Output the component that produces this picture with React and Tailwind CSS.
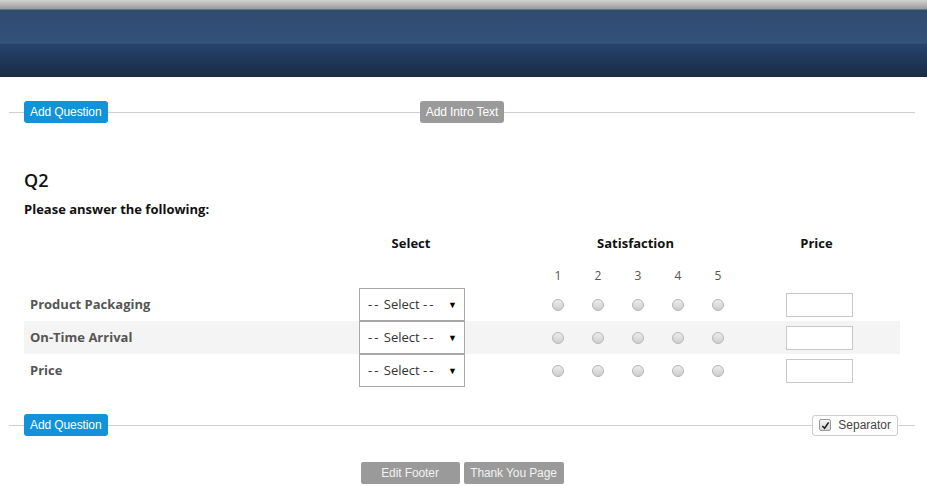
const rows = ['Product Packaging', 'On-Time Arrival', 'Price'];
const scale = [1, 2, 3, 4, 5];

function Btn({ children, gray }) {
  return (
    <button
      type="button"
      className={`h-[22px] shrink-0 rounded-[3px] px-[6px] font-['Liberation_Sans',Arial,sans-serif] text-[12px] leading-[22px] tracking-[-0.1px] text-white ${
        gray ? 'bg-[#9a9a9a]' : 'bg-[#1192d9]'
      }`}
    >
      {children}
    </button>
  );
}

function Line({ className = '' }) {
  return <div className={`h-px bg-[#cfcfcf] ${className}`} />;
}

function Radio() {
  return (
    <span className="block h-[12px] w-[12px] rounded-full border border-[#b4b4b4] bg-[linear-gradient(to_bottom,#ececec,#cdcdcd)]" />
  );
}

function FakeSelect() {
  return (
    <div className="flex h-[33px] w-[106px] items-center justify-between border border-[#a8a8a8] bg-white pl-[8px] pr-[7px] text-[13px] text-[#333]">
      <span>
        <span className="tracking-[2px]">--</span> Select <span className="tracking-[2px]">--</span>
      </span>
      <span className="text-[9px] text-black">▼</span>
    </div>
  );
}

export default function App() {
  return (
    <div className="min-h-[486px] bg-white font-['Open_Sans','Liberation_Sans',sans-serif] text-[#222]">
      <header className="h-[77px] bg-[linear-gradient(to_bottom,#d2d2d2_0px,#9a9a9a_9px,#2f4b6e_10px,#32517a_42px,#36577e_43px,#25436c_44px,#1a2c47_77px)]" />

      <div className="mt-[24px] grid grid-cols-[1fr_auto_1fr] items-center px-[9px] pr-[12px]">
        <div className="flex items-center">
          <Line className="w-[15px]" />
          <Btn>Add Question</Btn>
          <Line className="flex-1" />
        </div>
        <Btn gray>Add Intro Text</Btn>
        <Line />
      </div>

      <div className="px-[24px]">
        <h2 className="mt-[45px] text-[18px] leading-[24px] font-semibold text-[#111]">Q2</h2>
        <p className="mt-[8px] text-[13px] leading-[18px] font-bold text-[#111]">
          Please answer the following:
        </p>

        <div className="mt-[16px] w-[876px]">
          <div className="grid h-[18px] grid-cols-[316px_142px_56px_200px_162px] text-[13px] leading-[18px] font-bold text-[#111]">
            <div />
            <div className="text-center">Select</div>
            <div />
            <div className="pr-[5px] text-center">Satisfaction</div>
            <div className="pr-[5px] text-center">Price</div>
          </div>
          <div className="mt-[16px] grid h-[16px] grid-cols-[316px_142px_56px_repeat(5,40px)_162px] text-[12px] leading-[16px] text-[#555]">
            <div />
            <div />
            <div />
            {scale.map((n) => (
              <div key={n} className="text-center">
                {n}
              </div>
            ))}
            <div />
          </div>

          <div className="mt-[4px]">
            {rows.map((label, i) => (
              <div
                key={label}
                className={`grid h-[33px] grid-cols-[316px_142px_56px_repeat(5,40px)_162px] items-center ${
                  i === 1 ? 'bg-[#f4f4f4]' : ''
                }`}
              >
                <div className="pl-[6px] text-[13px] font-bold text-[#555]">{label}</div>
                <div className="flex justify-center pl-[2px]">
                  <FakeSelect />
                </div>
                <div />
                {scale.map((n) => (
                  <div key={n} className="flex justify-center">
                    <Radio />
                  </div>
                ))}
                <div className="flex justify-center">
                  <div className="h-[24px] w-[67px] border border-[#c8c8c8] bg-white" />
                </div>
              </div>
            ))}
          </div>
        </div>
      </div>

      <div className="mt-[27px] flex items-center px-[9px] pr-[12px]">
        <Line className="w-[15px]" />
        <Btn>Add Question</Btn>
        <Line className="flex-1" />
        <div className="flex h-[21px] items-center gap-[7px] rounded-[3px] border border-[#cccccc] bg-white px-[6px] font-['Liberation_Sans',Arial,sans-serif] text-[12px] text-[#444]">
          <span className="flex h-[12px] w-[12px] items-center justify-center rounded-[2px] border border-[#9a9a9a] bg-[linear-gradient(to_bottom,#f4f4f4,#d8d8d8)]">
            <svg width="9" height="9" viewBox="0 0 10 10">
              <path d="M1.5 5.5 L4 8 L8.5 1.5" fill="none" stroke="#222" strokeWidth="1.8" />
            </svg>
          </span>
          <span>Separator</span>
        </div>
        <Line className="w-[17px]" />
      </div>

      <div className="mt-[26px] flex justify-center gap-[4px] pr-[3px] font-['Liberation_Sans',Arial,sans-serif]">
        <button type="button" className="h-[22px] w-[99px] rounded-[2px] bg-[#9a9a9a] text-[12px] leading-[22px] tracking-[-0.1px] text-[#f2f2f2]">
          Edit Footer
        </button>
        <button type="button" className="h-[22px] w-[100px] rounded-[2px] bg-[#9a9a9a] text-[12px] leading-[22px] tracking-[-0.1px] text-[#f2f2f2]">
          Thank You Page
        </button>
      </div>
    </div>
  );
}
